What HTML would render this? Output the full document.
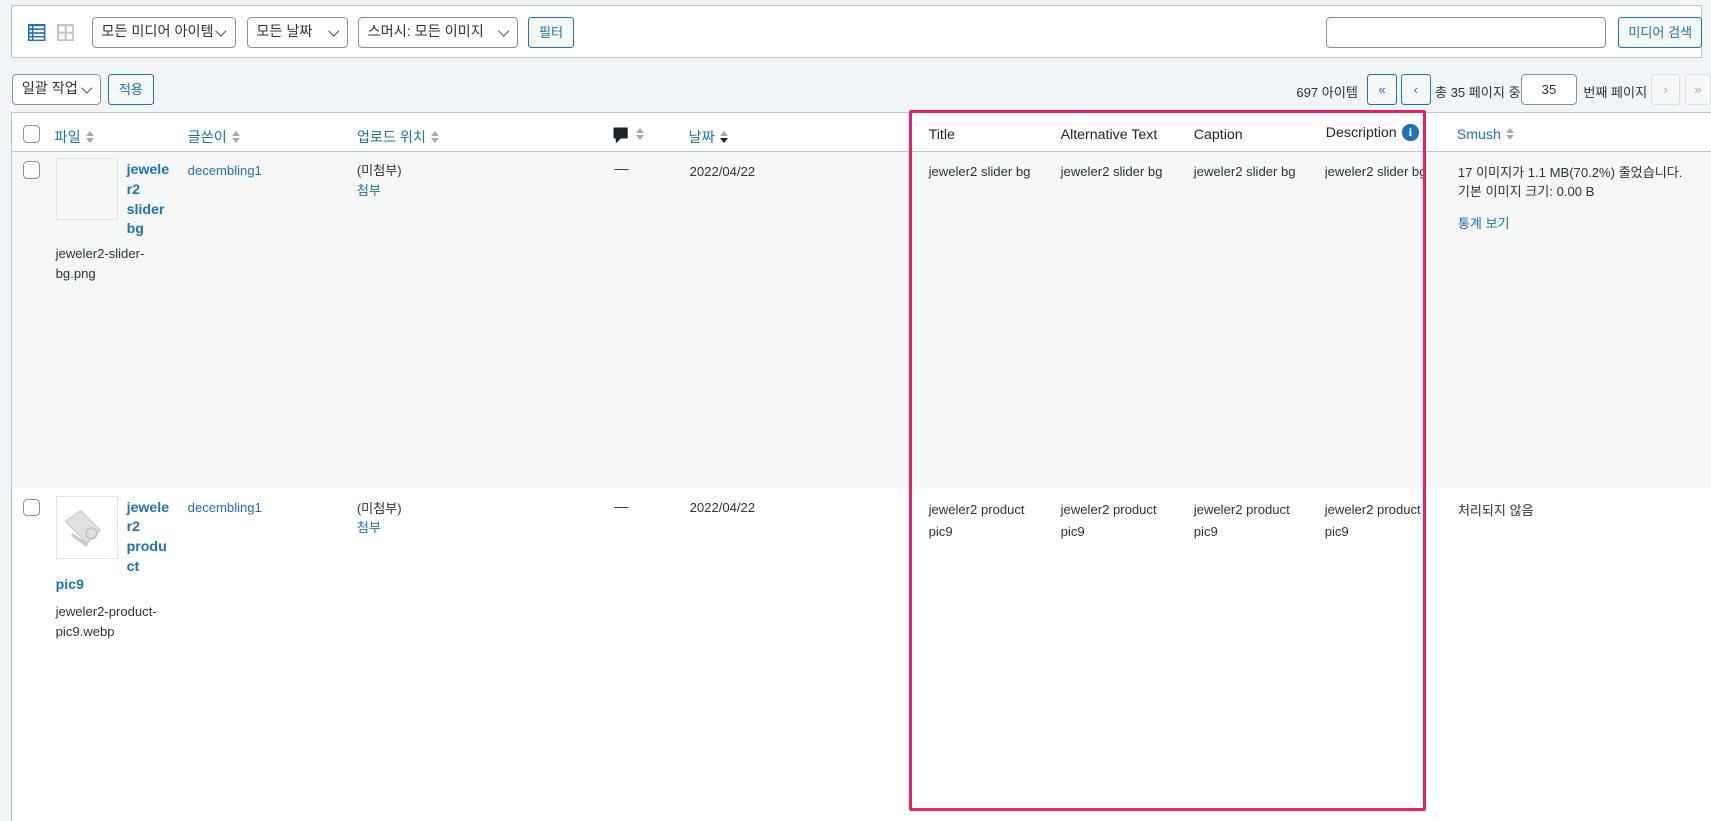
<!DOCTYPE html>
<html><head><meta charset="utf-8">
<style>
html,body{margin:0;padding:0;background:#f2f5f7;width:1711px;height:821px;overflow:hidden}
#w{position:absolute;left:0;top:0;width:1568px;height:752px;overflow:hidden;zoom:1.0912;font-family:"Liberation Sans","Noto Sans CJK KR",sans-serif;font-size:13px;color:#2c3338}
.a{position:absolute;white-space:nowrap}
.box{position:absolute;box-sizing:border-box}
.sel{position:absolute;box-sizing:border-box;border:1px solid #8c8f94;border-radius:4px;background:#fff;height:28px;line-height:27px;padding-left:8px;font-size:13px;color:#2c3338}
.sel:after{content:"";position:absolute;right:9px;top:8px;width:6px;height:6px;border-right:1.5px solid #50575e;border-bottom:1.5px solid #50575e;transform:rotate(45deg)}
.btn{position:absolute;box-sizing:border-box;border:1px solid #2271b1;border-radius:3px;background:#f6f7f7;color:#2271b1;height:28px;line-height:28px;text-align:center;font-size:12px}
.btnd{position:absolute;box-sizing:border-box;border:1px solid #dcdcde;border-radius:3px;background:#f6f7f7;color:#a7aaad;height:28px;line-height:28px;text-align:center;font-size:12px}
.cb{position:absolute;width:14px;height:14px;border:1px solid #8c8f94;border-radius:4px;background:#fff}
.lk{color:#2271b1}
.sort{display:inline-block;width:8px;height:12px;vertical-align:-2px;margin-left:5px;position:relative}
.sort:before{content:"";position:absolute;left:0;top:0;border-left:4px solid transparent;border-right:4px solid transparent;border-bottom:5px solid #a7aaad}
.sort:after{content:"";position:absolute;left:0;top:7px;border-left:4px solid transparent;border-right:4px solid transparent;border-top:5px solid #a7aaad}
.sort.d:after{border-top-color:#1d2327}
.t{line-height:18px}
</style></head><body><div id="w">
<div class="box" style="left:10px;top:5px;width:1550px;height:48px;background:#fff;border:1px solid #c3c4c7"></div>
<svg class="a" style="left:26px;top:22px" width="16" height="16" viewBox="0 0 16 16"><rect x="0" y="0" width="16" height="16" fill="#2271b1"/><g fill="#fff"><rect x="1.5" y="2" width="2" height="2"/><rect x="5" y="2" width="9.5" height="2"/><rect x="1.5" y="5.5" width="2" height="2"/><rect x="5" y="5.5" width="9.5" height="2"/><rect x="1.5" y="9" width="2" height="2"/><rect x="5" y="9" width="9.5" height="2"/><rect x="1.5" y="12.3" width="2" height="2"/><rect x="5" y="12.3" width="9.5" height="2"/></g></svg>
<svg class="a" style="left:52px;top:22px" width="16" height="16" viewBox="0 0 16 16"><g fill="none" stroke="#c3c4c7" stroke-width="2"><rect x="1" y="1" width="14" height="14"/><line x1="8" y1="1" x2="8" y2="15"/><line x1="1" y1="8" x2="15" y2="8"/></g></svg>
<div class="sel" style="left:84px;top:16px;width:132px">모든 미디어 아이템</div>
<div class="sel" style="left:226px;top:16px;width:93px">모든 날짜</div>
<div class="sel" style="left:328px;top:16px;width:147px">스머시: 모든 이미지</div>
<div class="btn" style="left:484px;top:16px;width:42px">필터</div>
<div class="box" style="left:1215px;top:16px;width:257px;height:28px;border:1px solid #8c8f94;border-radius:4px;background:#fff"></div>
<div class="btn" style="left:1483px;top:16px;width:77px">미디어 검색</div>
<div class="sel" style="left:11px;top:68px;width:82px">일괄 작업</div>
<div class="btn" style="left:99px;top:68px;width:42px">적용</div>
<div class="a" style="left:1188px;top:75px;font-size:12px">697 아이템</div>
<div class="btn" style="left:1253px;top:68px;width:27px">«</div>
<div class="btn" style="left:1284px;top:68px;width:27px">‹</div>
<div class="a" style="left:1315px;top:75px;font-size:12px">총 35 페이지 중</div>
<div class="box" style="left:1394px;top:68px;width:51px;height:28px;border:1px solid #8c8f94;border-radius:4px;background:#fff;text-align:center;line-height:28px;font-size:12px">35</div>
<div class="a" style="left:1451px;top:75px;font-size:12px">번째 페이지</div>
<div class="btnd" style="left:1513px;top:68px;width:27px">›</div>
<div class="btnd" style="left:1544px;top:68px;width:24px">»</div>
<div class="box" style="left:10px;top:103px;width:1558px;height:649px;background:#fff;border:1px solid #c3c4c7;border-bottom:none;border-right:none"></div>
<div class="box" style="left:11px;top:138px;width:1557px;height:1px;background:#c3c4c7"></div>
<div class="box" style="left:11px;top:139px;width:1557px;height:308px;background:#f6f7f7"></div>
<div class="cb" style="left:21px;top:115px"></div>
<div class="a lk" style="left:50px;top:116px">파일<span class="sort"></span></div>
<div class="a lk" style="left:172px;top:116px">글쓴이<span class="sort"></span></div>
<div class="a lk" style="left:327px;top:116px">업로드 위치<span class="sort"></span></div>
<svg class="a" style="left:562px;top:116px" width="14" height="15" viewBox="0 0 14 15"><path d="M1 1h12v9H7l-4 4v-4H1z" fill="#1d2327" stroke="#1d2327" stroke-linejoin="round"/></svg>
<div class="a" style="left:578px;top:116px"><span class="sort"></span></div>
<div class="a lk" style="left:631px;top:116px">날짜<span class="sort d"></span></div>
<div class="a" style="left:851px;top:116px;color:#1d2327">Title</div>
<div class="a" style="left:972px;top:116px;color:#1d2327">Alternative Text</div>
<div class="a" style="left:1094px;top:116px;color:#1d2327">Caption</div>
<div class="a" style="left:1215px;top:115px;color:#1d2327">Description</div>
<div class="a" style="left:1285px;top:114px;width:15px;height:15px;border-radius:50%;background:#2271b1;color:#fff;font-weight:bold;font-size:11px;line-height:15px;text-align:center;font-family:'Liberation Serif',serif">i</div>
<div class="a lk" style="left:1335px;top:116px">Smush<span class="sort"></span></div>
<div class="cb" style="left:21px;top:148px"></div>
<div class="box" style="left:51px;top:145px;width:57px;height:57px;border:1px solid #e2e3e4;background:#f6f7f7"></div>
<div class="a lk t" style="left:116px;top:148px;font-weight:bold">jewele<br>r2<br>slider<br>bg</div>
<div class="a t" style="left:51px;top:224px;font-size:12px">jeweler2-slider-<br>bg.png</div>
<div class="a lk" style="left:172px;top:149px;font-size:12px">decembling1</div>
<div class="a t" style="left:327px;top:148px;font-size:12px">(미첨부)<br><span class="lk">첨부</span></div>
<div class="a" style="left:563px;top:148px">—</div>
<div class="a" style="left:632px;top:150px;font-size:12px">2022/04/22</div>
<div class="a" style="left:851px;top:150px;font-size:12px">jeweler2 slider bg</div>
<div class="a" style="left:972px;top:150px;font-size:12px">jeweler2 slider bg</div>
<div class="a" style="left:1094px;top:150px;font-size:12px">jeweler2 slider bg</div>
<div class="a" style="left:1214px;top:150px;font-size:12px;width:90px;overflow:hidden">jeweler2 slider bg</div>
<div class="a t" style="left:1336px;top:149px;font-size:12px">17 이미지가 1.1 MB(70.2%) 줄었습니다.<br>기본 이미지 크기: 0.00 B</div>
<div class="a lk" style="left:1336px;top:195px;font-size:12px">통계 보기</div>
<div class="cb" style="left:21px;top:457px"></div>
<div class="box" style="left:51px;top:455px;width:57px;height:57px;border:1px solid #e2e3e4;background:#fff"></div>
<svg class="a" style="left:56px;top:462px" width="46" height="42" viewBox="0 0 46 42"><path d="M4 16 L18 6 L36 24 L24 36 Z" fill="#e0e0e0" stroke="#c8c8c8"/><circle cx="28" cy="27" r="5" fill="none" stroke="#b8b8b8"/><path d="M10 28 L24 38" stroke="#c8c8c8" stroke-width="3"/></svg>
<div class="a lk t" style="left:116px;top:457px;font-weight:bold">jewele<br>r2<br>produ<br>ct</div>
<div class="a lk" style="left:51px;top:529px;font-weight:bold">pic9</div>
<div class="a t" style="left:51px;top:552px;font-size:12px">jeweler2-product-<br>pic9.webp</div>
<div class="a lk" style="left:172px;top:458px;font-size:12px">decembling1</div>
<div class="a t" style="left:327px;top:457px;font-size:12px">(미첨부)<br><span class="lk">첨부</span></div>
<div class="a" style="left:563px;top:457px">—</div>
<div class="a" style="left:632px;top:458px;font-size:12px">2022/04/22</div>
<div class="a t" style="left:851px;top:457px;font-size:12px;line-height:20px">jeweler2 product<br>pic9</div>
<div class="a t" style="left:972px;top:457px;font-size:12px;line-height:20px">jeweler2 product<br>pic9</div>
<div class="a t" style="left:1094px;top:457px;font-size:12px;line-height:20px">jeweler2 product<br>pic9</div>
<div class="a t" style="left:1214px;top:457px;font-size:12px;line-height:20px">jeweler2 product<br>pic9</div>
<div class="a" style="left:1336px;top:458px;font-size:12px">처리되지 않음</div>
<div class="box" style="left:833px;top:101px;width:474px;height:642px;border:3px solid #e91e63;border-radius:2px"></div>
</div></body></html>
